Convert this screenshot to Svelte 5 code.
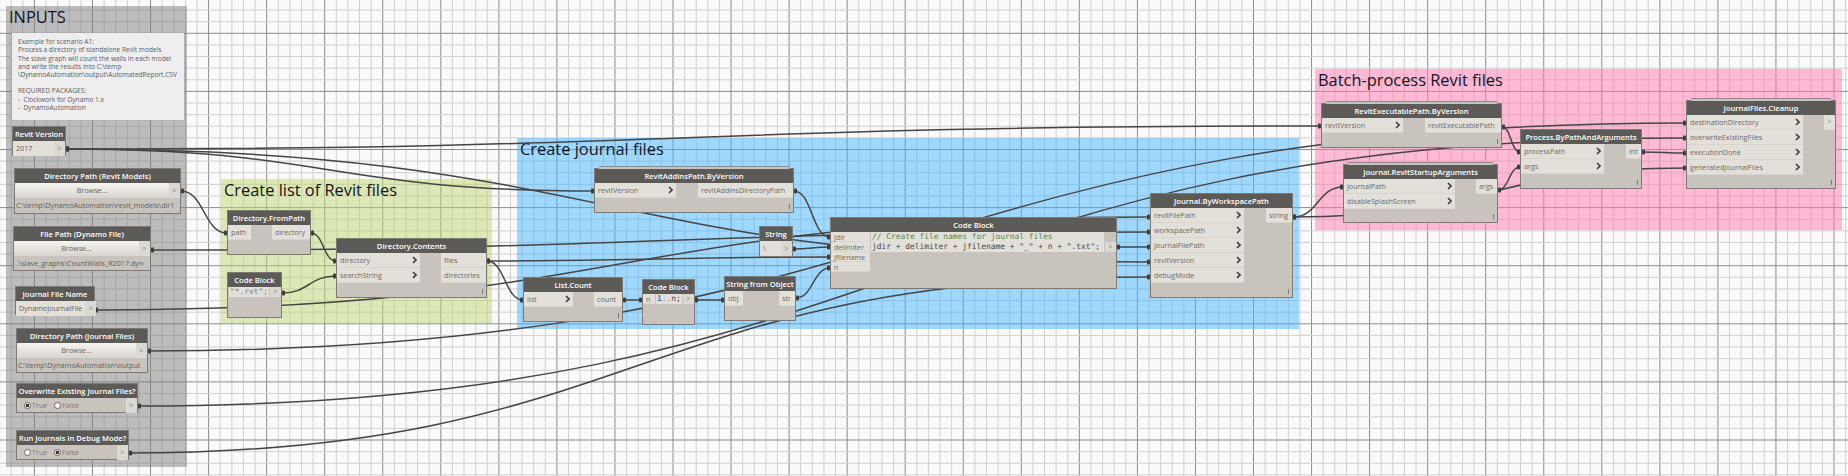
<script>
  const W = 1848, H = 476;

  // background grid: major line every 5th
  const stepX = 11.61, stepY = 11.62, x0 = 208.6 - stepX * 20, y0 = 33.3 - stepY * 5;
  const vlines = [], hlines = [];
  for (let i = 0; x0 + i * stepX < W; i++) vlines.push({ p: x0 + i * stepX, major: i % 5 === 0 });
  for (let i = 0; y0 + i * stepY < H; i++) hlines.push({ p: y0 + i * stepY, major: i % 5 === 0 });

  const groups = [
    { title: 'INPUTS', x: 6, y: 6, w: 181, h: 461, cls: 'grey' },
    { title: 'Create list of Revit files', x: 221, y: 179, w: 271, h: 144, cls: 'green' },
    { title: 'Create journal files', x: 517, y: 138, w: 782, h: 191, cls: 'blue' },
    { title: 'Batch-process Revit files', x: 1315, y: 69, w: 527, h: 161, cls: 'pink' }
  ];

  // [from x, from y, to x, to y]
  const wires = [
    [66, 149, 1321, 126],
    [66, 149, 594, 191],
    [66, 149, 1150, 262],
    [181, 191, 227, 233],
    [311, 233, 336, 261],
    [282, 293, 336, 276],
    [151, 250, 1150, 232],
    [487, 261, 523, 300],
    [487, 261, 830, 257],
    [95, 310, 1150, 217],
    [148, 351, 1686, 123],
    [138, 406, 1686, 138],
    [129, 453, 1150, 277],
    [794, 191, 830, 237],
    [793, 249, 830, 247],
    [796, 298, 830, 268],
    [623, 300, 642, 300],
    [695, 300, 724, 300],
    [1117, 247, 1150, 247],
    [1293, 217, 1343, 187],
    [1293, 217, 1686, 168],
    [1502, 127, 1520, 152],
    [1498, 190, 1520, 167],
    [1642, 152, 1686, 153]
  ];

  function wirePath([a, b, c, d]) {
    const h = (c - a) * 0.5;
    return `M${a} ${b} C${a + h} ${b} ${c - h} ${d} ${c} ${d}`;
  }

  const nodes = [
    { kind: 'value', title: 'Revit Version', x: 12, y: 126, w: 54, h: 30, text: '2017' },
    { kind: 'browse', title: 'Directory Path (Revit Models)', x: 14, y: 168, w: 167, h: 46, path: 'C:\\temp\\DynamoAutomation\\revit_models\\dir1' },
    { kind: 'browse', title: 'File Path (Dynamo File)', x: 13, y: 226, w: 138, h: 45, path: '..\\slave_graphs\\CountWalls_R2017.dyn' },
    { kind: 'value', title: 'Journal File Name', x: 15, y: 286, w: 80, h: 29, text: 'DynamoJournalFile' },
    { kind: 'browse', title: 'Directory Path (Journal Files)', x: 16, y: 328, w: 132, h: 45, path: 'C:\\temp\\DynamoAutomation\\output' },
    { kind: 'bool', title: 'Overwrite Existing Journal Files?', x: 16, y: 383, w: 122, h: 30, on: true },
    { kind: 'bool', title: 'Run Journals in Debug Mode?', x: 16, y: 430, w: 113, h: 30, on: false },

    { kind: 'fn', title: 'Directory.FromPath', x: 227, y: 210, w: 84, h: 45, lw: 23, rw: 38, inputs: ['path'], outputs: ['directory'], plain: true },
    { kind: 'code', title: 'Code Block', x: 227, y: 272, w: 55, h: 46, ports: [], lines: [[['"*.rvt";', 'str']]] },
    { kind: 'fn', title: 'Directory.Contents', x: 336, y: 238, w: 151, h: 60, lw: 83, rw: 45, inputs: ['directory', 'searchString'], outputs: ['files', 'directories'], lacing: true },

    { kind: 'fn', title: 'RevitAddinsPath.ByVersion', x: 594, y: 168, w: 200, h: 45, lw: 81, rw: 95, inputs: ['revitVersion'], outputs: ['revitAddinsDirectoryPath'], lacing: true, stacked: true },
    { kind: 'string', title: 'String', x: 759, y: 226, w: 34, h: 31, text: '\\' },
    { kind: 'fn', title: 'List.Count', x: 523, y: 277, w: 100, h: 45, lw: 49, rw: 28, inputs: ['list'], outputs: ['count'], lacing: true },
    { kind: 'code', title: 'Code Block', x: 642, y: 279, w: 53, h: 46, ports: ['n'], lines: [[['1', 'num'], ['..', 'str'], ['n;', 'id']]] },
    { kind: 'fn', title: 'String from Object', x: 724, y: 276, w: 72, h: 45, lw: 18, rw: 16, inputs: ['obj'], outputs: ['str'], plain: true },
    {
      kind: 'code', title: 'Code Block', x: 830, y: 217, w: 287, h: 72, ports: ['jdir', 'delimiter', 'jfilename', 'n'],
      lines: [
        [['// Create file names for journal files', 'cmt']],
        [['jdir + delimiter + jfilename + "_" + n + ".txt";', 'id']]
      ]
    },
    { kind: 'fn', title: 'Journal.ByWorkspacePath', x: 1150, y: 193, w: 143, h: 105, lw: 93, rw: 26, inputs: ['revitFilePath', 'workspacePath', 'journalFilePath', 'revitVersion', 'debugMode'], outputs: ['string'], lacing: true },

    { kind: 'fn', title: 'RevitExecutablePath.ByVersion', x: 1321, y: 103, w: 181, h: 45, lw: 81, rw: 76, inputs: ['revitVersion'], outputs: ['revitExecutablePath'], lacing: true, stacked: true },
    { kind: 'fn', title: 'Process.ByPathAndArguments', x: 1520, y: 129, w: 122, h: 60, lw: 83, rw: 15, inputs: ['processPath', 'args'], outputs: ['int'], lacing: true },
    { kind: 'fn', title: 'Journal.RevitStartupArguments', x: 1343, y: 164, w: 155, h: 59, lw: 111, rw: 21, inputs: ['journalPath', 'disableSplashScreen'], outputs: ['args'], lacing: true, stacked: true },
    { kind: 'fn', title: 'JournalFiles.Cleanup', x: 1686, y: 100, w: 150, h: 89, lw: 116, rw: 11, inputs: ['destinationDirectory', 'overwriteExistingFiles', 'executionDone', 'generatedJournalFiles'], outputs: ['>'], lacing: true, stacked: true }
  ];
</script>

{#snippet chevron()}
  <svg class="chev" width="5" height="8" viewBox="0 0 5 8"><path d="M1 1 L4 4 L1 7" /></svg>
{/snippet}

<div class="canvas">
  <svg class="layer" width={W} height={H}>
    {#each vlines as l}
      <line x1={l.p} x2={l.p} y1="0" y2={H} class:major={l.major} class="grid" />
    {/each}
    {#each hlines as l}
      <line y1={l.p} y2={l.p} x1="0" x2={W} class:major={l.major} class="grid" />
    {/each}
  </svg>

  {#each groups as g}
    <div class="group {g.cls}" style="left:{g.x}px;top:{g.y}px;width:{g.w}px;height:{g.h}px">{g.title}</div>
  {/each}

  <svg class="layer" width={W} height={H}>
    {#each wires as w}
      <path class="wire" d={wirePath(w)} />
      <rect class="nub" x={w[0]} y={w[1] - 2.5} width="3" height="5" rx="1" />
      <rect class="nub" x={w[2] - 3} y={w[3] - 2.5} width="3" height="5" rx="1" />
    {/each}
  </svg>

  <div class="note">
    <div>Example for scenario A1:</div>
    <div>Process a directory of standalone Revit models</div>
    <div>The slave graph will count the walls in each model</div>
    <div>and write the results into C:\temp</div>
    <div>\DynamoAutomation\output\AutomatedReport.CSV</div>
    <div class="gap">REQUIRED PACKAGES:</div>
    <div>- &nbsp;Clockwork for Dynamo 1.x</div>
    <div>- &nbsp;DynamoAutomation</div>
  </div>

  {#each nodes as n}
    <div class="node" class:stacked={n.stacked} style="left:{n.x}px;top:{n.y}px;width:{n.w}px;height:{n.h}px">
      <div class="head">{n.title}</div>

      {#if n.kind === 'fn'}
        <div class="body">
          <div class="col" style="width:{n.lw}px">
            {#each n.inputs as p}
              <div class="row">
                <span>{p}</span>
                {#if !n.plain}{@render chevron()}{/if}
              </div>
            {/each}
          </div>
          <div class="col" style="width:{n.rw}px">
            {#each n.outputs as p}
              <div class="row" class:arrow={p === '>'}>{p}</div>
            {/each}
          </div>
        </div>
        {#if n.lacing}<i class="lacing"></i>{/if}
      {:else if n.kind === 'value'}
        <div class="inline">
          <div class="field">{n.text}</div>
          <div class="out">&gt;</div>
        </div>
      {:else if n.kind === 'string'}
        <div class="inline">
          <div class="field dark">{n.text}</div>
          <div class="out">&gt;</div>
        </div>
      {:else if n.kind === 'browse'}
        <div class="browse">
          <div class="btn">Browse...</div>
          <div class="out">&gt;</div>
        </div>
        <div class="path">{n.path}</div>
      {:else if n.kind === 'bool'}
        <div class="inline">
          <div class="radios">
            <span class="radio" class:on={n.on}></span><span class="lbl">True</span>
            <span class="radio" class:on={!n.on}></span><span class="lbl">False</span>
          </div>
          <div class="out">&gt;</div>
        </div>
      {:else if n.kind === 'code'}
        <div class="code">
          {#if n.ports.length}
            <div class="ports" class:wide={n.ports.length > 1}>
              {#each n.ports as p}<div class="port">{p}</div>{/each}
            </div>
          {/if}
          <div class="src">
            {#each n.lines as line}
              <div class="line">{#each line as t}<span class={t[1]}>{t[0]}</span>{/each}</div>
            {/each}
          </div>
          <div class="outs">
            {#each n.lines as _, i}
              <div class="cell" class:blank={i < n.lines.length - 1}>{i === n.lines.length - 1 ? '>' : ''}</div>
            {/each}
          </div>
        </div>
      {/if}
    </div>
  {/each}
</div>

<style>
  :global(body) {
    margin: 0;
    background: #fafafa;
  }

  .canvas {
    position: relative;
    width: 1848px;
    height: 476px;
    overflow: hidden;
    font-family: "Open Sans", "Noto Sans", sans-serif;
    background: #fafafa;
  }

  .layer {
    position: absolute;
    left: 0;
    top: 0;
  }

  .grid {
    stroke: #d0d0d0;
    stroke-width: 1;
  }

  .grid.major {
    stroke: #8c8c8c;
  }

  .wire {
    fill: none;
    stroke: #454545;
    stroke-width: 1.5;
  }

  .nub {
    fill: #3c3c3c;
  }

  .group {
    position: absolute;
    box-sizing: border-box;
    padding: 0 3px;
    font-size: 16.4px;
    line-height: 22px;
    color: #15151f;
    white-space: nowrap;
  }

  .grey { background: rgba(125, 125, 125, 0.5); }
  .green { background: rgba(190, 214, 112, 0.5); }
  .blue { background: rgba(70, 182, 255, 0.5); }
  .pink { background: rgba(255, 122, 175, 0.5); }

  .note {
    position: absolute;
    left: 12px;
    top: 33px;
    width: 172px;
    height: 87px;
    box-sizing: border-box;
    padding: 5px 6px;
    background: #eeeeee;
    box-shadow: 0 0 1px #999;
    color: #5c5c5c;
    font-size: 6.6px;
    line-height: 8.3px;
    white-space: nowrap;
  }

  .note .gap {
    margin-top: 8px;
  }

  .node {
    position: absolute;
    box-sizing: border-box;
    display: flex;
    flex-direction: column;
    background: #c8c4bd;
    border: 1px solid #7d7a75;
    color: #6c6a67;
    font-size: 7.2px;
    white-space: nowrap;
  }

  .stacked::before {
    content: "";
    position: absolute;
    left: 4px;
    right: 4px;
    top: -3px;
    height: 2px;
    background: #c8c4bd;
    border-top: 1px solid #8f8c87;
  }

  .head {
    flex: none;
    height: 14px;
    line-height: 14px;
    background: #5c5a57;
    color: #fff;
    font-weight: 600;
    font-size: 7.6px;
    text-align: center;
  }

  .body {
    flex: 1;
    display: flex;
    justify-content: space-between;
    align-items: flex-start;
  }

  .col {
    flex: none;
  }

  .row {
    box-sizing: border-box;
    height: 15px;
    line-height: 14px;
    padding: 0 3px;
    background: #e3e0da;
    border-bottom: 1px solid #d8d5cf;
    display: flex;
    justify-content: space-between;
    align-items: center;
  }

  .row.arrow {
    justify-content: center;
    padding: 0;
    color: #8a8884;
    font-size: 7px;
  }

  .chev {
    flex: none;
  }

  .chev path {
    fill: none;
    stroke: #3e3e3e;
    stroke-width: 1.6;
  }

  .lacing {
    position: absolute;
    right: 3px;
    bottom: 3px;
    width: 1px;
    height: 5px;
    background: #7b7975;
  }

  .inline,
  .browse {
    flex: none;
    display: flex;
    height: 15px;
    line-height: 15px;
  }

  .field {
    flex: 1;
    padding: 0 3px;
    background: #e3e0da;
    color: #5f5e5b;
  }

  .out {
    flex: none;
    width: 11px;
    text-align: center;
    color: #86847f;
    font-size: 7.5px;
    background: #dcd9d3;
  }

  .btn {
    flex: 1;
    text-align: center;
    color: #66645f;
    background: linear-gradient(#f6f4f0, #d8d5cf);
  }

  .path {
    padding: 0 1px;
    line-height: 15px;
    color: #5f5e5b;
  }

  .radios {
    flex: 1;
    padding-left: 7px;
    display: flex;
    align-items: center;
    color: #7d7b77;
  }

  .radio {
    box-sizing: border-box;
    width: 7px;
    height: 7px;
    border-radius: 50%;
    border: 1px solid #666;
    background: #fbfbfb;
    margin-right: 1px;
  }

  .radio.on {
    background: radial-gradient(circle, #333 0 1.6px, #fbfbfb 2px);
  }

  .lbl {
    width: 22px;
  }

  .code {
    flex: none;
    display: flex;
    align-items: flex-start;
    font-family: "DejaVu Sans Mono", "Liberation Mono", monospace;
    font-size: 7.9px;
  }

  .ports {
    flex: none;
    width: 12px;
    font-family: "Open Sans", sans-serif;
    font-size: 7.2px;
  }

  .ports.wide {
    width: 39px;
  }

  .port {
    box-sizing: border-box;
    height: 10px;
    line-height: 10px;
    padding-left: 3px;
    background: #e3e0da;
    border-bottom: 1px solid #d8d5cf;
  }

  .src {
    flex: 1;
    margin-left: 1px;
    background: #e3e0da;
  }

  .line {
    height: 10px;
    line-height: 10px;
    padding-left: 1px;
  }

  .outs {
    flex: none;
    width: 11px;
    margin-left: 1px;
  }

  .cell {
    height: 10px;
    line-height: 10px;
    text-align: center;
    color: #86847f;
    background: #dcd9d3;
    font-family: "Open Sans", sans-serif;
    font-size: 7px;
  }

  .cell.blank {
    background: transparent;
  }

  .str { color: #807e7a; }
  .num { color: #2f7fd8; font-weight: 700; }
  .id { color: #454545; }
  .cmt { color: #3f8f45; }
</style>
